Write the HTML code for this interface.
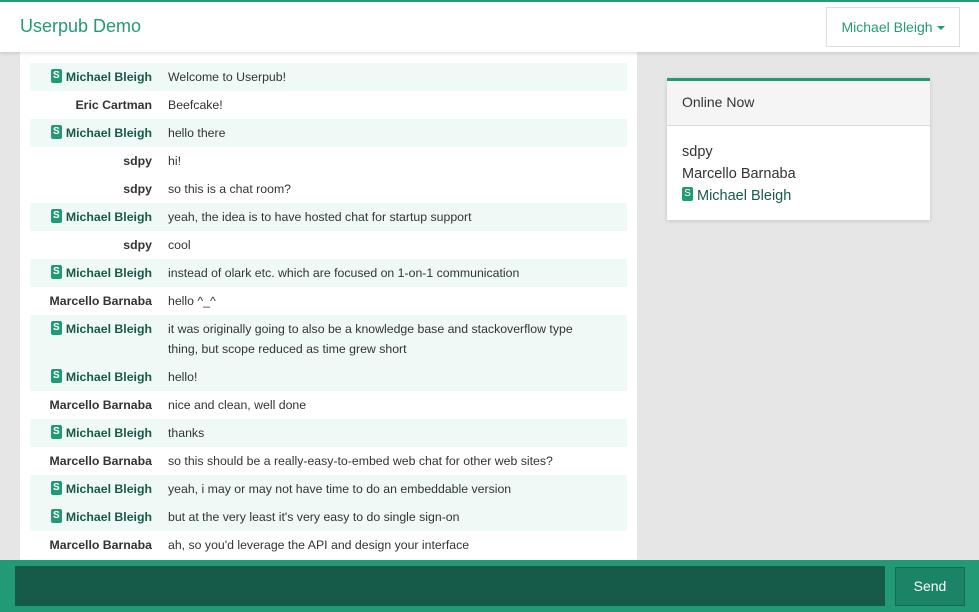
<!DOCTYPE html>
<html><head><meta charset="utf-8"><style>
*{box-sizing:border-box;margin:0;padding:0}
body{width:979px;height:612px;overflow:hidden;background:#e6e6e6;font-family:"Liberation Sans",sans-serif;position:relative}
.top{position:absolute;left:0;top:0;width:979px;height:52px;background:#fff;border-top:2px solid #239a76;box-shadow:0 1px 4px rgba(0,0,0,.15);z-index:2}
.brand{position:absolute;left:20px;top:14px;font-size:18px;color:#239a76}
.user{position:absolute;left:826px;top:5px;width:134px;height:40px;border:1px solid #ddd;color:#239a76;font-size:14px;line-height:38px;text-align:center}
.user:after{content:"";display:inline-block;margin-left:4px;vertical-align:middle;border-left:4px solid transparent;border-right:4px solid transparent;border-top:4px solid #239a76}
.chat{position:absolute;left:20px;top:52px;width:617px;height:508px;background:#fff;padding-top:11px}
.row{margin-left:10px;width:597px;display:flex;font-size:12.3px;line-height:28px;color:#333}
.row.s{background:#eff9f5}
.n{width:122px;text-align:right;font-weight:bold;color:#333;white-space:nowrap;flex:none}
.s .n{color:#165a4a}
.m{padding-left:16px;flex:1;padding-right:30px}
.two .m{line-height:20px;padding-top:4px;padding-bottom:4px}
.b{display:inline-block;width:11px;height:14px;background:#239a76;color:#fff;font-size:10px;line-height:14px;text-align:center;border-radius:2px;margin-right:4px;vertical-align:middle;position:relative;top:-2px;font-weight:bold}
.panel{position:absolute;left:667px;top:78px;width:263px;height:142px;background:#fff;border-top:3px solid #239a76;box-shadow:0 1px 4px rgba(0,0,0,.15)}
.ph{height:45px;background:#f5f5f5;border-bottom:1px solid #ddd;padding:13px 15px;font-size:14px;color:#333}
.pb{padding:15px;font-size:14.5px;line-height:22px;color:#333}
.pb .g{color:#165a4a}
.bot{position:absolute;left:0;top:560px;width:979px;height:52px;background:#239a76}
.in{position:absolute;left:15px;top:6px;width:870px;height:40px;background:#165a4a}
.send{position:absolute;left:895px;top:7px;width:70px;height:39px;background:#1c8466;border:1px solid #156a52;color:#fff;font-size:14px;line-height:37px;text-align:center}
</style></head><body>
<div class="top"><div class="brand">Userpub Demo</div><div class="user">Michael Bleigh</div></div>
<div class="chat">
<div class="row s"><div class="n"><span class="b">S</span>Michael Bleigh</div><div class="m">Welcome to Userpub!</div></div>
<div class="row"><div class="n">Eric Cartman</div><div class="m">Beefcake!</div></div>
<div class="row s"><div class="n"><span class="b">S</span>Michael Bleigh</div><div class="m">hello there</div></div>
<div class="row"><div class="n">sdpy</div><div class="m">hi!</div></div>
<div class="row"><div class="n">sdpy</div><div class="m">so this is a chat room?</div></div>
<div class="row s"><div class="n"><span class="b">S</span>Michael Bleigh</div><div class="m">yeah, the idea is to have hosted chat for startup support</div></div>
<div class="row"><div class="n">sdpy</div><div class="m">cool</div></div>
<div class="row s"><div class="n"><span class="b">S</span>Michael Bleigh</div><div class="m">instead of olark etc. which are focused on 1-on-1 communication</div></div>
<div class="row"><div class="n">Marcello Barnaba</div><div class="m">hello ^_^</div></div>
<div class="row s two"><div class="n" style="line-height:28px"><span class="b">S</span>Michael Bleigh</div><div class="m">it was originally going to also be a knowledge base and stackoverflow type thing, but scope reduced as time grew short</div></div>
<div class="row s"><div class="n"><span class="b">S</span>Michael Bleigh</div><div class="m">hello!</div></div>
<div class="row"><div class="n">Marcello Barnaba</div><div class="m">nice and clean, well done</div></div>
<div class="row s"><div class="n"><span class="b">S</span>Michael Bleigh</div><div class="m">thanks</div></div>
<div class="row"><div class="n">Marcello Barnaba</div><div class="m">so this should be a really-easy-to-embed web chat for other web sites?</div></div>
<div class="row s"><div class="n"><span class="b">S</span>Michael Bleigh</div><div class="m">yeah, i may or may not have time to do an embeddable version</div></div>
<div class="row s"><div class="n"><span class="b">S</span>Michael Bleigh</div><div class="m">but at the very least it's very easy to do single sign-on</div></div>
<div class="row"><div class="n">Marcello Barnaba</div><div class="m">ah, so you'd leverage the API and design your interface</div></div>
</div>
<div class="panel"><div class="ph">Online Now</div><div class="pb">sdpy<br>Marcello Barnaba<br><span class="g"><span class="b" style="font-weight:normal">S</span>Michael Bleigh</span></div></div>
<div class="bot"><div class="in"></div><div class="send">Send</div></div>
</body></html>
